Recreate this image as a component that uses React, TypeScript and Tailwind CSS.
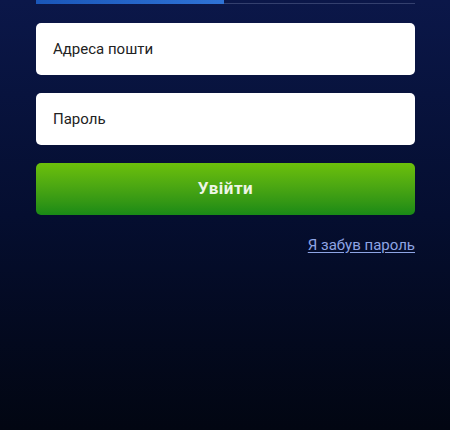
export default function App() {
  return (
    <div
      className="w-[450px] h-[430px] overflow-hidden bg-gradient-to-b from-[#0b1749] via-[#050e30] to-[#020612] pl-[36px] pr-[35px]"
      style={{ fontFamily: "Roboto, 'Liberation Sans', sans-serif" }}
    >
      <div className="flex h-[4px] items-end">
        <div className="h-[4px] w-[188px] bg-gradient-to-r from-[#1a56b8] to-[#2f73d6]" />
        <div className="h-px flex-1 bg-[#34406e]" />
      </div>
      <div className="mt-[19px] flex flex-col gap-[18px]">
        <div className="flex h-[52px] items-center rounded-[5px] bg-white px-[17px] text-[15px] text-[#222]">
          Адреса пошти
        </div>
        <div className="flex h-[52px] items-center rounded-[5px] bg-white px-[17px] text-[15px] text-[#222]">
          Пароль
        </div>
        <button className="flex h-[52px] items-center justify-center rounded-[5px] bg-gradient-to-b from-[#6cc00a] to-[#188a16] text-[17px] font-bold tracking-[0.5px] text-[#eef5e6]">
          Увійти
        </button>
      </div>
      <div className="mt-[19px] flex justify-end">
        <a className="text-[15px] text-[#8ea4e4] underline underline-offset-2">Я забув пароль</a>
      </div>
    </div>
  );
}
